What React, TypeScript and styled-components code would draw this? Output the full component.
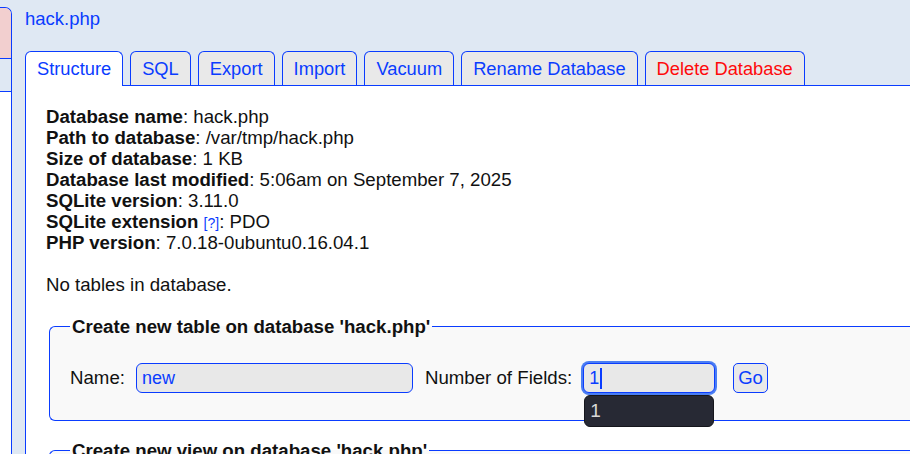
import React from "react";
import styled, { createGlobalStyle } from "styled-components";

const blue = "#0a3cff";

const GlobalStyle = createGlobalStyle`
  html, body {
    margin: 0;
    padding: 0;
    background: #dfe8f3;
    font-family: "Liberation Sans", Arial, sans-serif;
    font-size: 18.67px;
    color: #111;
    overflow: hidden;
  }
`;

const Page = styled.div`
  display: flex;
  width: 910px;
  height: 454px;
  overflow: hidden;
`;

const Sidebar = styled.div`
  width: 11px;
  margin-top: 7px;
  display: flex;
  flex-direction: column;
  border-top: 1px solid ${blue};
  border-right: 1px solid ${blue};
  border-top-right-radius: 7px;
  overflow: hidden;

  .head {
    height: 50px;
    background: #f2cfcf;
    border-bottom: 1px solid ${blue};
  }
  .sub {
    height: 32px;
    background: #dfe8f3;
    border-bottom: 1px solid ${blue};
  }
  .rest {
    flex: 1;
    background: #fff;
  }
`;

const Main = styled.div`
  flex: 1;
  min-width: 0;
  padding: 8px 0 0 13px;
`;

const Title = styled.a`
  display: block;
  color: ${blue};
  text-decoration: none;
  font-size: 18.5px;
  line-height: 21px;
`;

const Tabs = styled.div`
  display: flex;
  align-items: flex-end;
  gap: 7px;
  margin-top: 22px;
`;

const Tab = styled.a<{ $active?: boolean; $danger?: boolean }>`
  display: flex;
  align-items: center;
  height: ${(p) => (p.$active ? "34px" : "33px")};
  padding: 0 11px;
  border: 1px solid ${blue};
  border-bottom: none;
  border-radius: 6px 6px 0 0;
  background: ${(p) => (p.$active ? "#fff" : "#e9e9e9")};
  color: ${(p) => (p.$danger ? "#ff0a0a" : blue)};
  margin-bottom: ${(p) => (p.$active ? "-1px" : "0")};
  position: relative;
  z-index: ${(p) => (p.$active ? 1 : 0)};
  font-size: 18.3px;
  text-decoration: none;
  white-space: nowrap;
`;

const Panel = styled.div`
  background: #fff;
  border-top: 1px solid ${blue};
  border-left: 1px solid ${blue};
  padding: 20px 0 0 20px;
  min-height: 400px;
`;

const InfoLine = styled.div`
  height: 21px;
  line-height: 21px;
  white-space: nowrap;
  b {
    font-weight: bold;
  }
`;

const Help = styled.a`
  color: ${blue};
  font-size: 14px;
  line-height: 0;
  text-decoration: none;
`;

const Note = styled.div`
  margin-top: 21px;
  line-height: 21px;
`;

const Fieldset = styled.fieldset`
  margin: 21px 0 0 3px;
  padding: 26px 20px 27px 20px;
  border: 1px solid ${blue};
  border-right: none;
  border-radius: 6px 0 0 6px;
  background: #f9f9f9;
  min-width: 0;

  & + & {
    margin-top: 19px;
  }

  legend {
    padding: 0 2px;
    font-weight: bold;
    line-height: 21px;
    white-space: nowrap;
  }
`;

const Row = styled.div`
  display: flex;
  align-items: center;
  white-space: nowrap;
`;

const Label = styled.span`
  margin-right: 11px;
`;

const Field = styled.input<{ $width: number }>`
  box-sizing: border-box;
  width: ${(p) => p.$width}px;
  height: 30px;
  border: 1px solid ${blue};
  border-radius: 6px;
  background: #e8e8e8;
  color: ${blue};
  font: inherit;
  font-size: 18px;
  padding: 0 5px;
  margin-right: 12px;
  outline: none;
`;

const FocusWrap = styled.div`
  position: relative;
  margin-right: 18px;
`;

const FocusField = styled.div`
  box-sizing: border-box;
  width: 132px;
  height: 30px;
  display: flex;
  align-items: center;
  border: 1px solid ${blue};
  border-radius: 6px;
  background: #e8e8e8;
  color: ${blue};
  font-size: 18px;
  padding: 0 5px;
  box-shadow: 0 0 0 2px #4a7ef3;

  .caret {
    display: inline-block;
    width: 2px;
    height: 21px;
    background: ${blue};
    margin-left: 1px;
  }
`;

const Suggest = styled.div`
  position: absolute;
  left: 1px;
  top: 32px;
  box-sizing: border-box;
  width: 130px;
  height: 32px;
  background: #272934;
  border: 1px solid #15161c;
  border-radius: 6px;
  color: #d8d8d8;
  font-size: 19px;
  padding: 0 5px;
  display: flex;
  align-items: center;
  z-index: 5;
`;

const GoButton = styled.button`
  height: 30px;
  padding: 0 4px;
  border: 1px solid ${blue};
  border-radius: 5px;
  background: #e9e9e9;
  color: ${blue};
  font: inherit;
  font-size: 18.5px;
`;

const tabs = [
  { label: "Structure", active: true },
  { label: "SQL" },
  { label: "Export" },
  { label: "Import" },
  { label: "Vacuum" },
  { label: "Rename Database" },
  { label: "Delete Database", danger: true },
];

export default function App() {
  return (
    <>
      <GlobalStyle />
      <Page>
        <Sidebar>
          <div className="head" />
          <div className="sub" />
          <div className="rest" />
        </Sidebar>
        <Main>
          <Title href="#">hack.php</Title>
          <Tabs>
            {tabs.map((t) => (
              <Tab key={t.label} href="#" $active={t.active} $danger={t.danger}>
                {t.label}
              </Tab>
            ))}
          </Tabs>
          <Panel>
            <InfoLine><b>Database name</b>: hack.php</InfoLine>
            <InfoLine><b>Path to database</b>: /var/tmp/hack.php</InfoLine>
            <InfoLine><b>Size of database</b>: 1 KB</InfoLine>
            <InfoLine><b>Database last modified</b>: 5:06am on September 7, 2025</InfoLine>
            <InfoLine><b>SQLite version</b>: 3.11.0</InfoLine>
            <InfoLine>
              <b>SQLite extension</b> <Help href="#">[?]</Help>: PDO
            </InfoLine>
            <InfoLine><b>PHP version</b>: 7.0.18-0ubuntu0.16.04.1</InfoLine>
            <Note>No tables in database.</Note>

            <Fieldset>
              <legend>Create new table on database 'hack.php'</legend>
              <Row>
                <Label>Name:</Label>
                <Field $width={277} defaultValue="new" readOnly />
                <Label>Number of Fields:</Label>
                <FocusWrap>
                  <FocusField>
                    1<span className="caret" />
                  </FocusField>
                  <Suggest>1</Suggest>
                </FocusWrap>
                <GoButton>Go</GoButton>
              </Row>
            </Fieldset>
            <Fieldset>
              <legend>Create new view on database 'hack.php'</legend>
              <Row>
                <Label>Name:</Label>
              </Row>
            </Fieldset>
          </Panel>
        </Main>
      </Page>
    </>
  );
}
